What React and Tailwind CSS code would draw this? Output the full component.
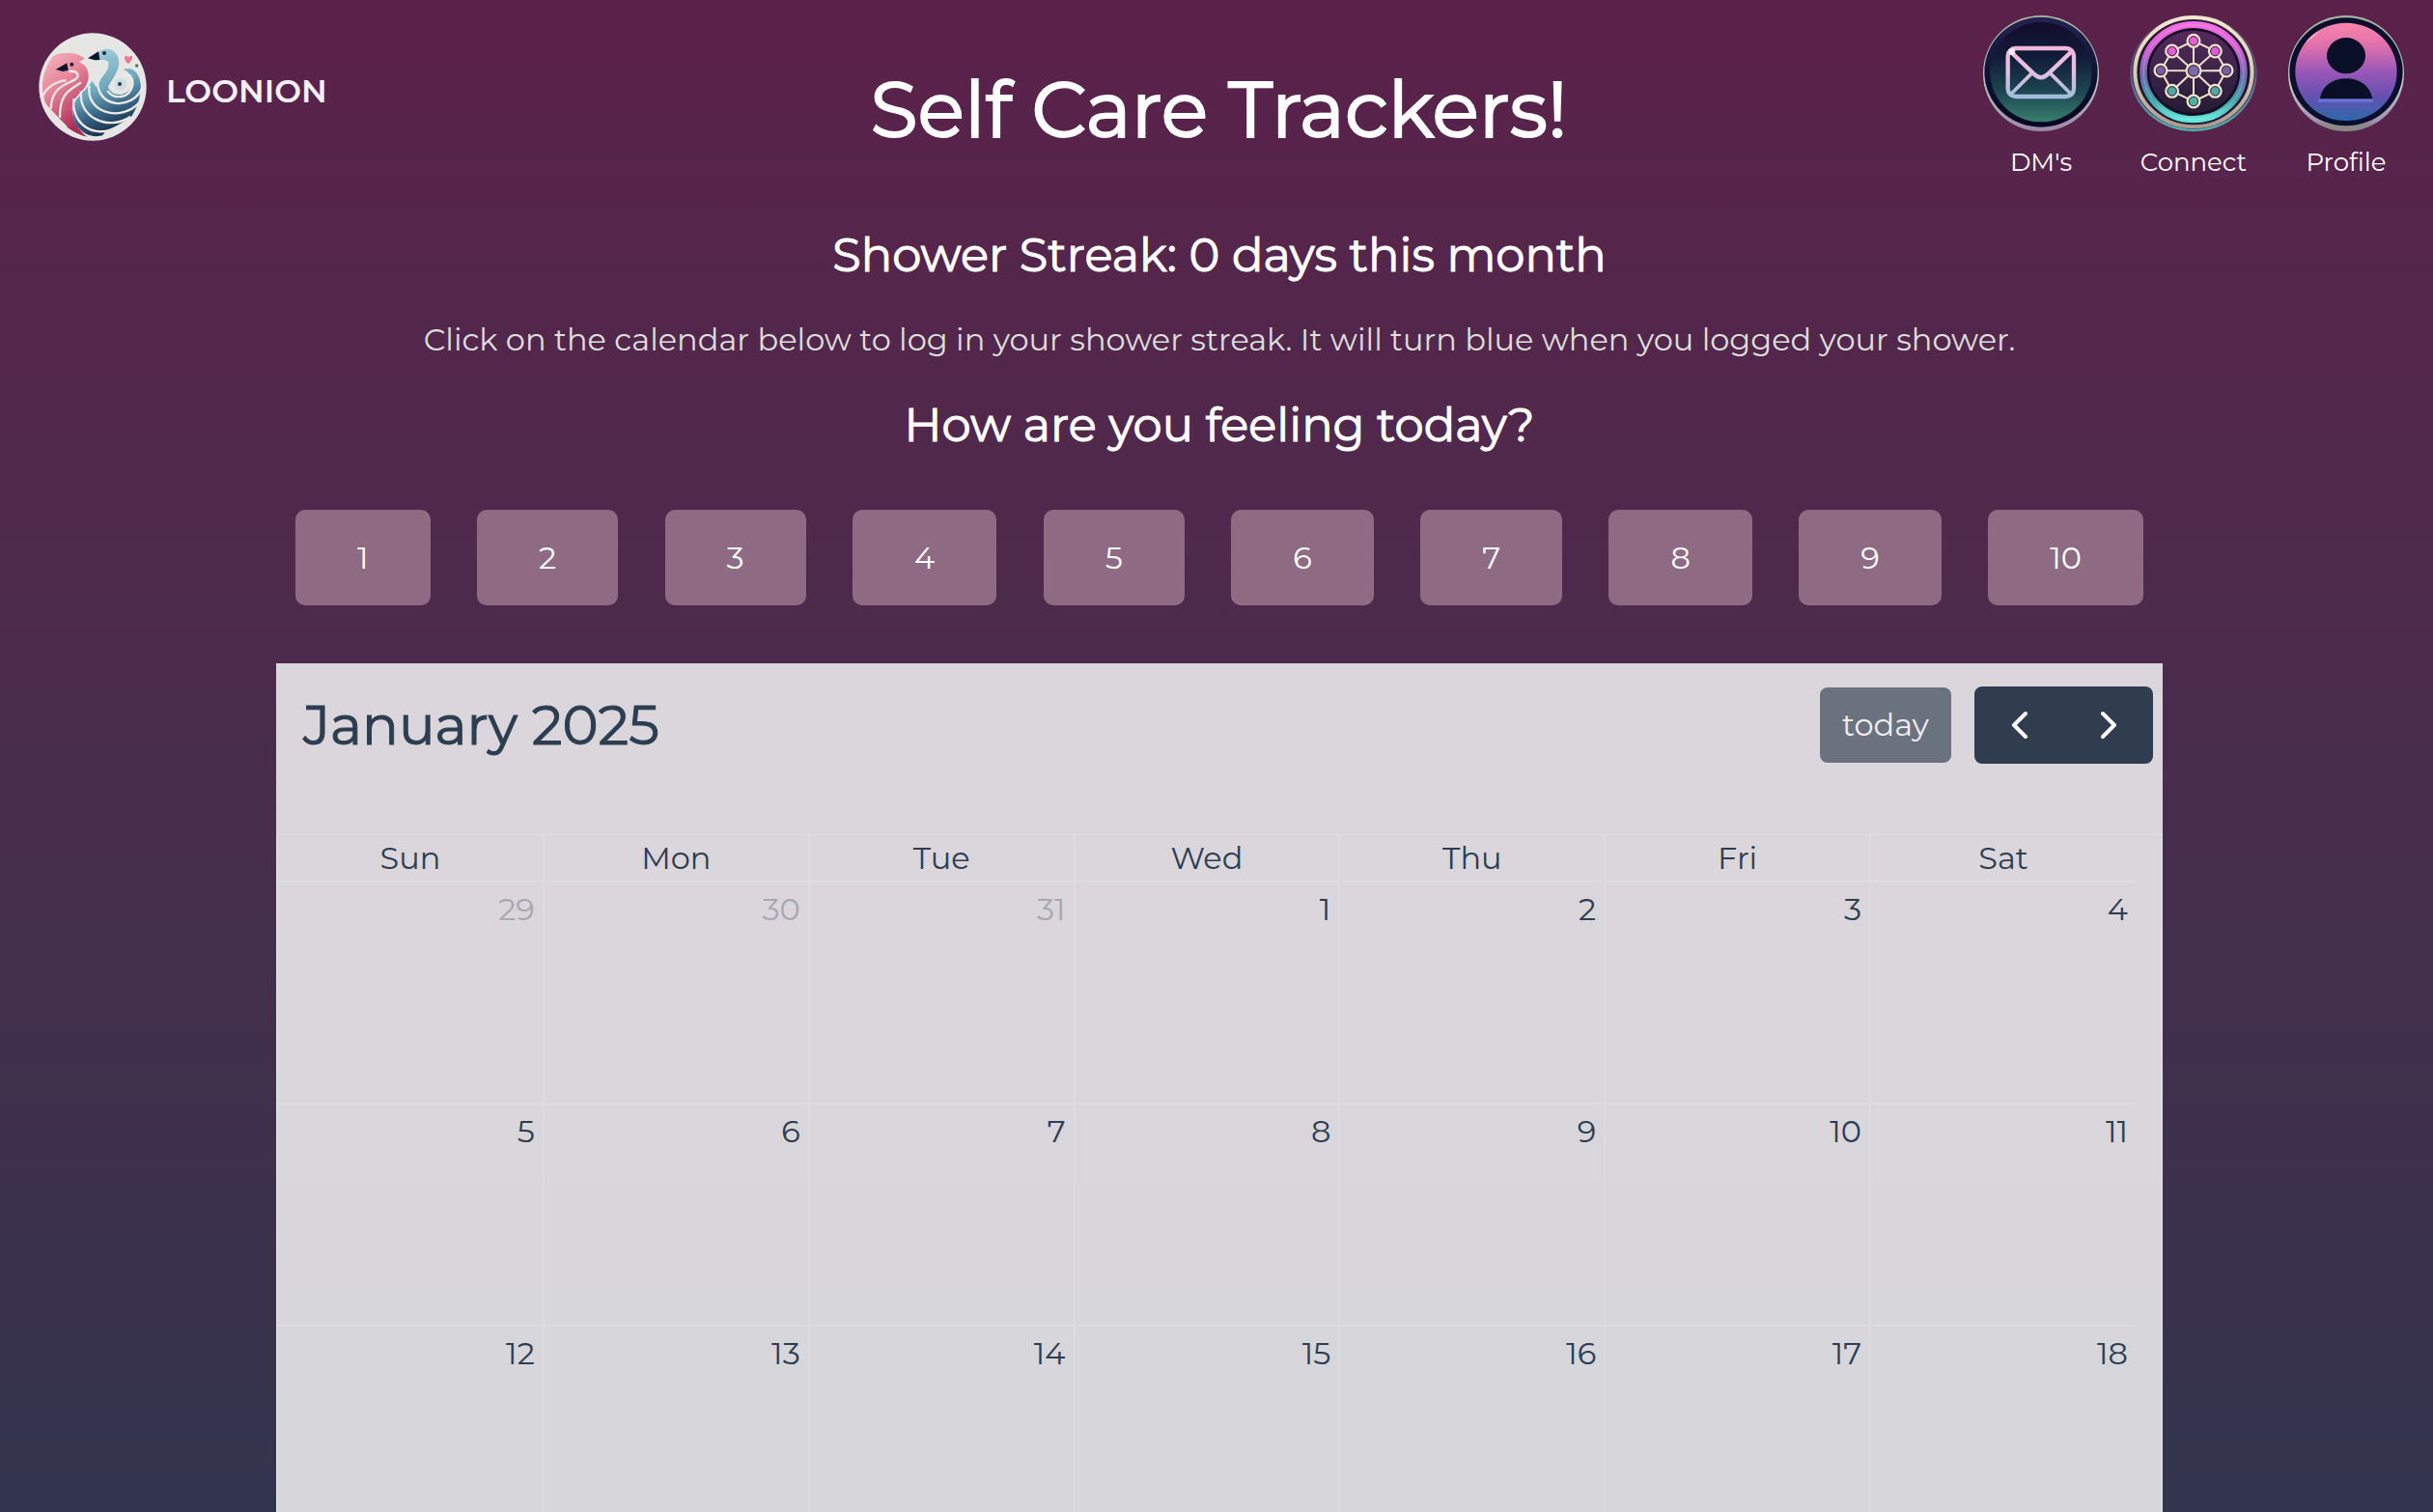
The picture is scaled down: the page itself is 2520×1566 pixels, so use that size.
import React, { useState } from 'react';
import { ChevronLeft, ChevronRight } from 'lucide-react';

const MOODS = [1, 2, 3, 4, 5, 6, 7, 8, 9, 10];
const DAYS = ['Sun', 'Mon', 'Tue', 'Wed', 'Thu', 'Fri', 'Sat'];
const WEEKS = [
  [29, 30, 31, 1, 2, 3, 4],
  [5, 6, 7, 8, 9, 10, 11],
  [12, 13, 14, 15, 16, 17, 18],
];

// outer nodes of the network icon
const NODES = [
  { x: 725, y: 126, fill: '#e65fd0' },
  { x: 792, y: 158, fill: '#d95fd0' },
  { x: 827, y: 218, fill: '#7a5f9c' },
  { x: 792, y: 282, fill: '#4fa79f' },
  { x: 725, y: 314, fill: '#4fb3a4' },
  { x: 658, y: 282, fill: '#4fa79f' },
  { x: 623, y: 218, fill: '#7a5f9c' },
  { x: 658, y: 158, fill: '#e65fd0' },
];

const Logo = () => (
  <svg viewBox="60 70 336 336" className="ml-[5px] w-28 h-28" aria-hidden="true">
    <defs>
      <linearGradient id="pinkBird" x1="0" y1="0" x2="0.5" y2="1">
        <stop offset="0" stopColor="#f6bcc6" />
        <stop offset="0.45" stopColor="#e8879c" />
        <stop offset="1" stopColor="#a92e57" />
      </linearGradient>
      <linearGradient id="blueBird" x1="0.3" y1="0" x2="0.6" y2="1">
        <stop offset="0" stopColor="#a3cfdb" />
        <stop offset="0.45" stopColor="#6fa7be" />
        <stop offset="0.72" stopColor="#356080" />
        <stop offset="1" stopColor="#10233a" />
      </linearGradient>
      <clipPath id="logoClip"><circle cx="228" cy="238" r="156" /></clipPath>
    </defs>
    <circle cx="228" cy="238" r="167" fill="#e6e6e4" />
    <g clipPath="url(#logoClip)">
      <path d="M60 190 C80 130 160 118 202 148 C202 154 190 158 184 160 C218 172 222 208 206 236 C190 262 164 270 164 306 C166 344 184 372 212 394 C170 384 100 340 78 280 Z" fill="url(#pinkBird)" />
      <path d="M154 190 C182 186 190 204 172 216 C140 232 100 240 98 306" fill="none" stroke="#e9e6e6" strokeWidth="7" />
      <path d="M192 224 C160 246 124 256 126 334" fill="none" stroke="#e9e6e6" strokeWidth="7" />
      <path d="M146 218 C120 218 82 240 74 266" fill="none" stroke="#e9e6e6" strokeWidth="7" />
      <path d="M66 270 L82 290 L100 310 L126 338 L150 362 L110 380 L60 320 Z" fill="#e6e6e4" />
      <path d="M236 154 C236 116 290 106 306 144 C320 180 288 212 276 238 C284 262 320 276 350 240 C354 206 340 188 322 184 C362 168 384 214 376 256 C368 316 328 384 240 392 C188 390 158 344 168 296 C178 266 206 252 226 220 C236 230 238 246 244 232 C256 202 284 186 276 160 C262 148 250 158 236 154 Z" fill="url(#blueBird)" />
      <path d="M274 250 C290 278 344 276 352 232 C354 204 336 192 320 200" fill="none" stroke="#ecebea" strokeWidth="7" />
      <path d="M244 222 C240 300 350 316 384 238" fill="none" stroke="#ecebea" strokeWidth="7" />
      <path d="M218 234 C204 316 312 350 372 288" fill="none" stroke="#ecebea" strokeWidth="7" />
      <path d="M192 252 C182 332 276 378 346 330" fill="none" stroke="#ecebea" strokeWidth="7" />
      <path d="M170 274 C158 350 232 404 306 362" fill="none" stroke="#ecebea" strokeWidth="7" />
      <path d="M350 330 L390 280 L390 400 L250 400 L268 376 L300 360 Z" fill="#e6e6e4" />
      <ellipse cx="315" cy="229" rx="20" ry="18" fill="#cddde0" />
    </g>
    <path d="M113 184 L148 164 L152 186 L136 190 Z" fill="#0d1528" />
    <path d="M213 149 L246 128 L250 154 L234 155 Z" fill="#0d1528" />
    <circle cx="163" cy="168" r="6" fill="#2a2032" />
    <circle cx="264" cy="133" r="6" fill="#152b42" />
    <circle cx="312" cy="229" r="6" fill="#1e3a4e" />
    <circle cx="365" cy="172" r="5" fill="#4c6a72" />
    <path d="M339 166 C322 152 326 140 333 141 Q338 142 339 147 Q342 141 348 142 C356 146 348 158 339 166 Z" fill="#ee7596" />
  </svg>
);

const DmIcon = () => (
  <svg viewBox="72 47 360 360" className="w-[120px] h-[120px]" aria-hidden="true">
    <defs>
      <linearGradient id="dmRim" x1="0" y1="0" x2="0" y2="1">
        <stop offset="0" stopColor="#a9b8a6" />
        <stop offset="0.6" stopColor="#b9c6c0" />
        <stop offset="1" stopColor="#9d86a8" />
      </linearGradient>
      <linearGradient id="dmFace" x1="0" y1="0" x2="0" y2="1">
        <stop offset="0" stopColor="#120b2c" />
        <stop offset="0.35" stopColor="#111c38" />
        <stop offset="0.7" stopColor="#1e4651" />
        <stop offset="1" stopColor="#37806d" />
      </linearGradient>
      <linearGradient id="dmEdge" x1="0" y1="0" x2="0" y2="1">
        <stop offset="0" stopColor="#242250" />
        <stop offset="0.5" stopColor="#101336" />
        <stop offset="1" stopColor="#070622" />
      </linearGradient>
      <linearGradient id="dmLine" gradientUnits="userSpaceOnUse" x1="0" y1="143" x2="0" y2="305">
        <stop offset="0" stopColor="#f3b5dc" />
        <stop offset="0.45" stopColor="#e6c0e2" />
        <stop offset="1" stopColor="#9fbddb" />
      </linearGradient>
    </defs>
    <circle cx="252" cy="227" r="180" fill="url(#dmRim)" />
    <ellipse cx="252" cy="223" rx="176" ry="171" fill="url(#dmEdge)" />
    <ellipse cx="252" cy="223" rx="158" ry="155" fill="url(#dmFace)" />
    <g fill="none" stroke="url(#dmLine)" strokeWidth="13" strokeLinejoin="round">
      <rect x="149" y="149" width="205" height="150" rx="24" />
      <path d="M158 160 L230 229 Q252 250 274 229 L346 160" />
      <path d="M160 290 L222 228 M344 290 L282 228" strokeWidth="11" />
    </g>
    <circle cx="162" cy="160" r="10" fill="#ffffff" opacity="0.8" />
  </svg>
);

const ConnectIcon = () => (
  <svg viewBox="527 47 396 360" className="w-[132px] h-[120px]" aria-hidden="true">
    <defs>
      <linearGradient id="netRing" x1="0" y1="0" x2="0" y2="1">
        <stop offset="0" stopColor="#f36be0" />
        <stop offset="0.25" stopColor="#d45fd2" />
        <stop offset="0.55" stopColor="#6b6db0" />
        <stop offset="0.8" stopColor="#43a3a8" />
        <stop offset="1" stopColor="#62e6dc" />
      </linearGradient>
      <linearGradient id="netOuter" x1="0" y1="0" x2="0" y2="1">
        <stop offset="0" stopColor="#7d3a70" />
        <stop offset="0.5" stopColor="#5d5787" />
        <stop offset="1" stopColor="#4fb6b8" />
      </linearGradient>
      <linearGradient id="netCream" x1="0" y1="0" x2="0" y2="1">
        <stop offset="0" stopColor="#f2e8cf" />
        <stop offset="0.5" stopColor="#d8cdb5" />
        <stop offset="1" stopColor="#a79c8d" />
      </linearGradient>
      <linearGradient id="netFace" x1="0" y1="0" x2="0" y2="1">
        <stop offset="0" stopColor="#552a5e" />
        <stop offset="1" stopColor="#241c33" />
      </linearGradient>
    </defs>
    <ellipse cx="725" cy="227" rx="197" ry="180" fill="url(#netOuter)" />
    <ellipse cx="725" cy="224" rx="191" ry="176" fill="#3b2442" />
    <ellipse cx="725" cy="223" rx="182" ry="170" fill="none" stroke="url(#netCream)" strokeWidth="12" />
    <ellipse cx="725" cy="223" rx="174" ry="162" fill="#20152f" />
    <ellipse cx="725" cy="223" rx="156" ry="147" fill="none" stroke="url(#netRing)" strokeWidth="22" />
    <ellipse cx="725" cy="223" rx="156" ry="147" fill="none" stroke="#ffffff" strokeOpacity="0.25" strokeWidth="3" />
    <ellipse cx="725" cy="222" rx="144" ry="135" fill="#140f24" />
    <ellipse cx="725" cy="222" rx="137" ry="128" fill="url(#netFace)" />
    <g stroke="#eee3cb" strokeWidth="6" fill="none">
      {NODES.map((n, i) => (
        <path key={i} d={`M725 219 L${n.x} ${n.y} L${NODES[(i + 1) % 8].x} ${NODES[(i + 1) % 8].y}`} />
      ))}
    </g>
    {NODES.map((n, i) => (
      <circle key={i} cx={n.x} cy={n.y} r="19" fill={n.fill} stroke="#eee3cb" strokeWidth="7" />
    ))}
    {NODES.map((n, i) => (
      <circle key={i} cx={n.x} cy={n.y} r="14" fill="none" stroke="#3a2348" strokeWidth="3" />
    ))}
    <circle cx="725" cy="219" r="22" fill="#7b6aa6" stroke="#eee3cb" strokeWidth="7" />
    <circle cx="725" cy="219" r="17" fill="none" stroke="#3a2348" strokeWidth="3" />
  </svg>
);

const ProfileIcon = () => (
  <svg viewBox="1020 47 360 360" className="w-[120px] h-[120px]" aria-hidden="true">
    <defs>
      <linearGradient id="pfRim" x1="0" y1="0" x2="0" y2="1">
        <stop offset="0" stopColor="#a5b3a0" />
        <stop offset="0.6" stopColor="#bccbc2" />
        <stop offset="0.9" stopColor="#a394b8" />
        <stop offset="0.95" stopColor="#8c8888" />
        <stop offset="1" stopColor="#8c8888" />
      </linearGradient>
      <linearGradient id="pfFace" x1="0" y1="0" x2="0" y2="1">
        <stop offset="0" stopColor="#f885ab" />
        <stop offset="0.22" stopColor="#e271ac" />
        <stop offset="0.5" stopColor="#9a57b8" />
        <stop offset="0.75" stopColor="#6550b0" />
        <stop offset="1" stopColor="#2d6aa8" />
      </linearGradient>
    </defs>
    <circle cx="1200" cy="227" r="180" fill="url(#pfRim)" />
    <ellipse cx="1200" cy="222" rx="176" ry="168" fill="#0b0e2c" />
    <ellipse cx="1200" cy="222" rx="158" ry="152" fill="url(#pfFace)" />
    <path d="M1072 134 Q1090 106 1118 94 Q1096 118 1072 134 Z" fill="#ffd9e4" opacity="0.6" />
    <ellipse cx="1200" cy="172" rx="60" ry="56" fill="#0a0f28" />
    <path d="M1114 306 H1284 V316 H1114 Z" fill="#6f7ae0" opacity="0.8" />
    <path d="M1118 306 C1126 264 1160 243 1200 243 C1240 243 1274 264 1282 306 Z" fill="#0a0f28" />
  </svg>
);

const NAV = [
  { label: "DM's", Icon: DmIcon },
  { label: 'Connect', Icon: ConnectIcon },
  { label: 'Profile', Icon: ProfileIcon },
];

export default function App() {
  const [mood, setMood] = useState(null);

  return (
    <div className="h-screen overflow-hidden bg-linear-to-b from-[#5b214b] to-[#32344d] text-white text-[32px] leading-10 font-[Montserrat,Inter,sans-serif]">
      {/* Header */}
      <header className="grid grid-cols-[1fr_auto_1fr] items-start pl-[35px] pr-[30px] pt-4">
        <a href="#home" className="flex items-center gap-5 pt-[18px] justify-self-start">
          <Logo />
          <span className="text-[33px] font-semibold text-[#f4f0f5] pt-2">LOONION</span>
        </a>
        <h1 className="text-[80px] leading-[100px] pt-12 [-webkit-text-stroke:2px]">Self Care Trackers!</h1>
        <nav className="flex gap-8 justify-self-end">
          {NAV.map(({ label, Icon }) => (
            <a key={label} href={`#${label}`} className="flex flex-col items-center gap-4">
              <Icon />
              <span className="text-[26px] leading-8">{label}</span>
            </a>
          ))}
        </nav>
      </header>

      <main className="pl-[286px] pr-[280px] pt-[38px]">
        {/* Intro */}
        <div className="flex flex-col items-center text-center">
          <h2 className="text-5xl leading-[60px] pt-3 [-webkit-text-stroke:1px]">Shower Streak: 0 days this month</h2>
          <p className="text-[#dddfdc] mt-[38px]">
            Click on the calendar below to log in your shower streak. It will turn blue when you logged your shower.
          </p>
          <h2 className="text-5xl leading-[60px] mt-[38px] [-webkit-text-stroke:1px]">How are you feeling today?</h2>
        </div>

        {/* Mood buttons */}
        <div className="flex justify-between px-5 mt-[58px]">
          {MOODS.map((n) => (
            <button
              key={n}
              type="button"
              aria-pressed={mood === n}
              onClick={() => setMood(n)}
              className="h-[99px] px-16 rounded-[10px] bg-[#8e6b83]"
            >
              {n}
            </button>
          ))}
        </div>

        {/* Calendar */}
        <section className="mt-[60px] bg-linear-to-b from-[#dbd6dc] to-[#d6d6db] text-[#2c3e50]">
          <div className="flex items-center justify-between h-44 pl-7 pr-2.5 pb-12">
            <h2 className="text-[56px] leading-[68px] [-webkit-text-stroke:1px]">January 2025</h2>
            <div className="flex items-center gap-6">
              <button type="button" disabled className="w-[136px] h-[78px] rounded-lg bg-[#6b727f] text-[#f0eef1]">
                today
              </button>
              <div className="flex rounded-lg bg-[#2f3d4e] text-white">
                <button type="button" aria-label="Previous month" className="w-[93px] h-20 flex items-center justify-center">
                  <ChevronLeft size={48} strokeWidth={2} />
                </button>
                <button type="button" aria-label="Next month" className="w-[92px] h-20 flex items-center justify-center">
                  <ChevronRight size={48} strokeWidth={2} />
                </button>
              </div>
            </div>
          </div>

          <div className="border-2 border-[#dddcde] pr-[26px]">
            <table className="w-full table-fixed border-collapse">
              <thead>
                <tr>
                  {DAYS.map((d) => (
                    <th key={d} scope="col" className="h-12 p-0 font-normal border-b-2 border-r-2 border-[#dddcde] last:border-r-0">{d}</th>
                  ))}
                </tr>
              </thead>
              <tbody>
                {WEEKS.map((week, w) => (
                  <tr key={w}>
                    {week.map((day, i) => (
                      <td
                        key={day}
                        className={`h-[230px] pt-2 pr-2 align-top text-right border-b-2 border-r-2 border-[#dddcde] last:border-r-0 ${w === 0 && i < 3 ? 'text-[#a6a8b2]' : ''}`}
                      >
                        {day}
                      </td>
                    ))}
                  </tr>
                ))}
              </tbody>
            </table>
          </div>
        </section>
      </main>
    </div>
  );
}
